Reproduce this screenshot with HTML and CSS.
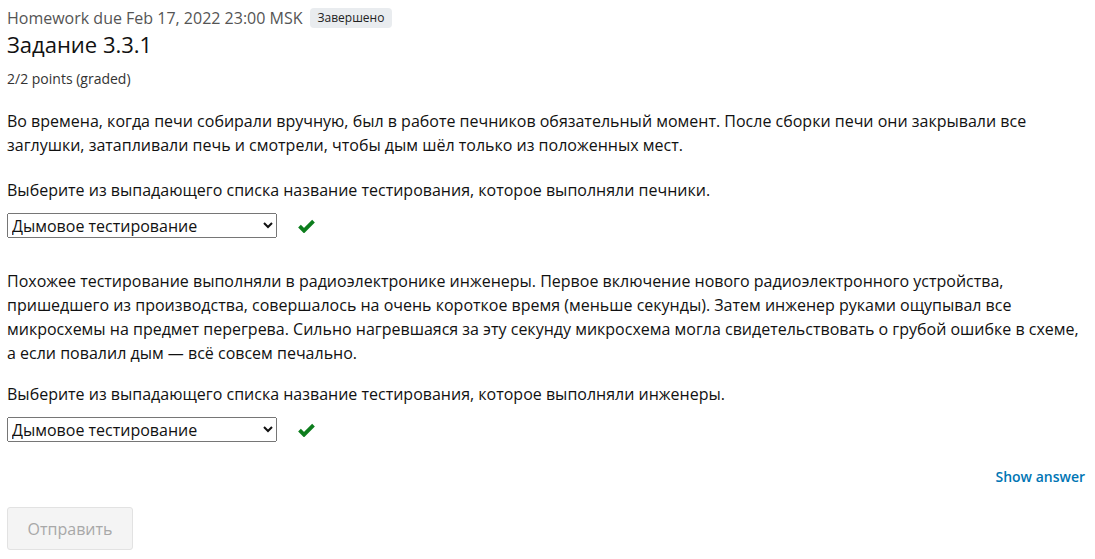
FILE: index.html
```html
<!DOCTYPE html>
<html lang="ru">
<head>
<meta charset="utf-8">
<link rel="stylesheet" href="styles.css">
</head>
<body>
<div class="page">
  <div class="meta">
    <span class="due">Homework due Feb 17, 2022 23:00 MSK</span>
    <span class="badge">Завершено</span>
  </div>
  <h2 class="title">Задание 3.3.1</h2>
  <div class="points">2/2 points (graded)</div>
  <p class="text intro">Во времена, когда печи собирали вручную, был в работе печников обязательный момент. После сборки печи они закрывали все заглушки, затапливали печь и смотрели, чтобы дым шёл только из положенных мест.</p>
  <p class="text prompt">Выберите из выпадающего списка название тестирования, которое выполняли печники.</p>
  <div class="answer">
    <select class="choice"><option>Дымовое тестирование</option></select>
    <svg class="check" width="17" height="14" viewBox="0 0 17 14"><path d="M1.5 7.2 L6 11.7 L15.5 2.2" fill="none" stroke="#0d7d1d" stroke-width="3.8"/></svg>
  </div>
  <p class="text story">Похожее тестирование выполняли в радиоэлектронике инженеры. Первое включение нового радиоэлектронного устройства, пришедшего из производства, совершалось на очень короткое время (меньше секунды). Затем инженер руками ощупывал все микросхемы на предмет перегрева. Сильно нагревшаяся за эту секунду микросхема могла свидетельствовать о грубой ошибке в схеме, а если повалил дым — всё совсем печально.</p>
  <p class="text prompt2">Выберите из выпадающего списка название тестирования, которое выполняли инженеры.</p>
  <div class="answer">
    <select class="choice"><option>Дымовое тестирование</option></select>
    <svg class="check" width="17" height="14" viewBox="0 0 17 14"><path d="M1.5 7.2 L6 11.7 L15.5 2.2" fill="none" stroke="#0d7d1d" stroke-width="3.8"/></svg>
  </div>
  <div class="actions">
    <a class="show" href="#">Show answer</a>
  </div>
  <button class="submit" disabled>Отправить</button>
</div>
</body>
</html>
```
FILE: styles.css
```css
html, body {
  margin: 0;
  padding: 0;
  background: #fff;
}
body {
  font-family: "Open Sans", "Noto Sans", sans-serif;
  color: #111;
}
.page {
  padding: 0 10px 0 7px;
}
.meta {
  display: flex;
  align-items: center;
  gap: 7px;
  height: 20px;
  margin-top: 8px;
}
.due {
  font-size: 16px;
  color: #555;
}
.badge {
  font-size: 12px;
  color: #222;
  background: #e9ecef;
  border-radius: 4px;
  padding: 2px 8px;
  line-height: 16px;
}
.title {
  font-size: 22px;
  font-weight: 400;
  margin: 0;
  line-height: 32px;
  color: #111;
}
.points {
  font-size: 14px;
  color: #333;
  margin-top: 10px;
  line-height: 18px;
}
.text {
  font-size: 16px;
  line-height: 24px;
  margin: 0;
  color: #111;
}
.intro { margin-top: 21px; }
.prompt { margin-top: 21px; }
.story { margin-top: 31px; }
.prompt2 { margin-top: 17px; }
.answer {
  display: flex;
  align-items: center;
  gap: 21px;
  margin-top: 11px;
  height: 25px;
}
.choice {
  width: 270px;
  height: 25px;
  font-family: "Open Sans", sans-serif;
  font-size: 16px;
  color: #111;
  margin: 0;
}
.actions {
  display: flex;
  justify-content: flex-end;
  margin-top: 25px;
  line-height: 20px;
}
.show {
  font-size: 14px;
  font-weight: 600;
  color: #0075b4;
  text-decoration: none;
}
.submit {
  display: block;
  margin-top: 20px;
  width: 126px;
  height: 43px;
  background: #f4f4f4;
  border: 1px solid #e2e2e2;
  border-radius: 3px;
  font-family: "Open Sans", sans-serif;
  font-size: 16px;
  color: #a8a8a8;
}
```
